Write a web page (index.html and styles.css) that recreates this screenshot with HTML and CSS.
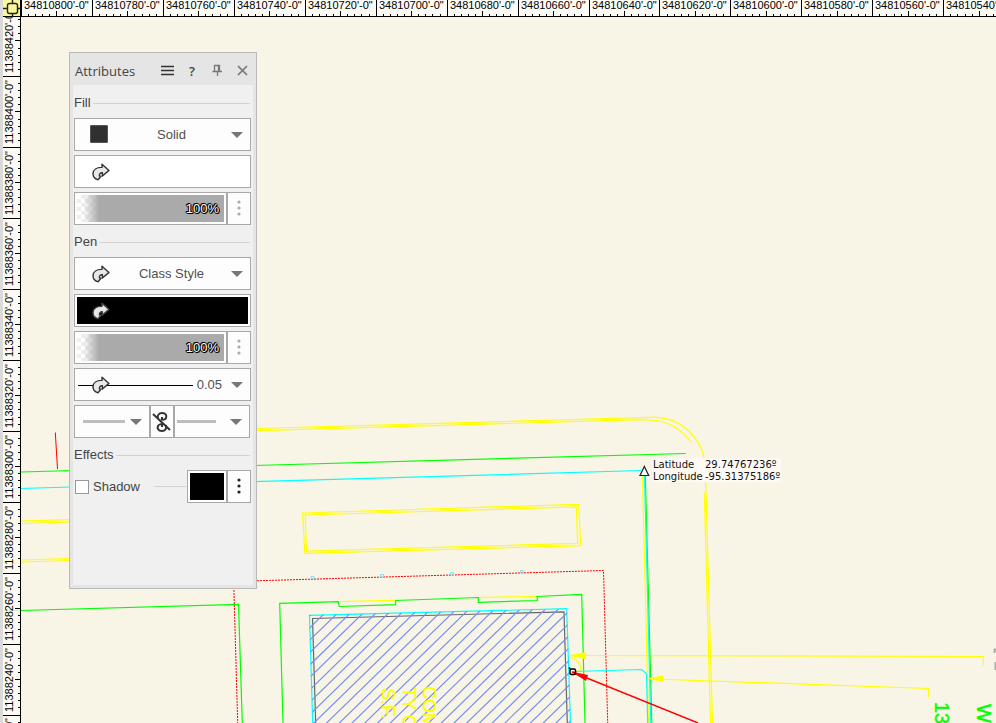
FILE: index.html
```html
<!DOCTYPE html>
<html lang="en">
<head>
<meta charset="utf-8">
<title>Site plan</title>
<link rel="stylesheet" href="styles.css">
</head>
<body>
<svg class="symbols" aria-hidden="true">
  <symbol id="class-arrow" viewBox="0 0 18 18">
    <path d="M10 1.2 17 7.4 10.4 13V9.8C8.4 9.6 7.2 10.6 7.4 13L9 13.2 6 16.8C2.6 16 1 13.4 1 10.6 1.2 6.8 4.6 4.2 10 4.4Z" stroke-width="1.4" stroke-linejoin="round"/>
  </symbol>
  <symbol id="caret" viewBox="0 0 12 6"><path d="M0 0H12L6 6Z" fill="#777"/></symbol>
  <symbol id="dots" viewBox="0 0 4 18"><circle cx="2" cy="3" r="1.6"/><circle cx="2" cy="9" r="1.6"/><circle cx="2" cy="15" r="1.6"/></symbol>
</svg>

<main class="workspace">
  <svg class="drawing" role="img" aria-label="Site plan drawing">
    <defs>
      <clipPath id="building"><path d="M309 615 567 609 571 730H313Z"/></clipPath>
    </defs>
    <g class="line yellow">
      <path d="M3 521.7 257 514M3 524 257 516.500M3 560.500 257 553M3 562.500 257 555"/>
      <path d="M257 428.500 650 417.400H655C682 417.500 702 440 704.500 460L705.500 475 712.500 723"/>
      <path d="M257 430.700 640 419.700 650 420C670 420.500 681 430 691.700 442.700M704.300 492.700 710.500 723"/>
      <path d="M302.700 513 578.700 504.300 580.700 545.700 304.700 553.300Z"/>
      <path d="M305.200 515 576.300 506.800 577.700 543.400 306.500 551.200Z"/>
      <path d="M642.500 476 648.500 723"/>
      <path d="M572 655.500 983.500 656.500V665M655 679 928.500 688.500V697"/>
      <path d="M570 657.500C577 658 581 664 581 671H575"/>
      <path d="M338 601.700 395.700 600.300M478.300 597.700 537 596.300"/>
    </g>
    <path class="line red" d="M55.300 432.500 57.500 469"/>
    <g class="line red dotted">
      <path d="M233.500 575 237.700 723M257 580.800 603.500 570.500 607.700 723"/>
    </g>
    <g class="line green">
      <path d="M3 472.500 685.700 453.500"/>
      <path d="M3 611 238.500 604.400 242.300 723"/>
      <path d="M283 723 279.700 603.400 338.300 601.700 339.300 606.500 395.700 604.700V600.500L478.300 597.500V602.300L537.500 600.500 537 596.500 581.700 594.500 585 723"/>
      <path d="M645.300 476 651.800 723"/>
    </g>
    <g class="line cyan">
      <path d="M3 489 641 470.500M644.500 476 650.800 723"/>
      <path d="M573 671.500 641.700 669.500 646.500 673.700 647.700 723"/>
      <path d="M312.700 723 309.500 615.400 566.700 608.700 570.500 723"/>
    </g>
    <path class="line wall" d="M315.700 723 312.500 618.500 564 611.800 567.300 723"/>
    <g id="hatch" class="line hatch" clip-path="url(#building)"></g>
    <g class="line marks">
      <path d="M311 578.500V576.500H314V578.500ZM380.500 577V574.500H383.500V577ZM450.500 575V572.500H453.500V575ZM520.500 573V570.500H523.500V573Z"/>
    </g>
    <g class="note yellow-text">
      <text transform="translate(423 686) rotate(90)">COM</text>
      <text transform="translate(403 687) rotate(90)">TY C</text>
      <text transform="translate(382 688) rotate(90)">S.F.</text>
    </g>
    <g class="note green-text">
      <text transform="translate(935 702) rotate(90)">13</text>
      <text transform="translate(977 704) rotate(90)">W</text>
    </g>
    <path class="stray" d="M994 649.500H996M994.500 649V653M995.500 662V670"/>
    <path fill="#ff0" d="M568 655.500 586 652V659.500ZM647 678.500 663 675.500V682Z"/>
    <path class="line red leader" d="M572 672 698 723"/>
    <path fill="red" d="M571 671.500 588 675 586 681Z"/>
    <rect class="node" x="570" y="669" width="5.500" height="5.500" rx="1.500"/>
    <path class="node" d="M569 667.500 571 670"/>
    <path class="vertex" d="M644.300 466.500 640 475.500H648.700Z"/>
    <rect x="652" y="458" width="129" height="24" fill="#fff9f4"/>
    <g class="coords">
      <text x="653" y="468">Latitude</text><text x="705" y="468">29.74767236º</text>
      <text x="653" y="480">Longitude</text><text x="705" y="480">-95.31375186º</text>
    </g>
    <g id="rulers">
      <rect class="ruler-bg" width="100%" height="17"/>
      <rect class="ruler-bg side" width="21" height="100%"/>
      <rect width="3" height="100%" fill="#dadada"/>
      <path id="ticks" class="ticks"/>
      <g id="ruler-labels" class="ruler-labels"></g>
      <rect x="3" width="17" height="16" fill="#fbf89b"/>
      <path class="ticks" d="M20.500 0V3000M3 16.500H3000"/>
      <path class="origin" d="M12.500 0V4M12.500 13V17M3 8.500H7M17 8.500H21"/>
      <rect class="origin" x="7.500" y="3.500" width="10" height="10" rx="2"/>
    </g>
  </svg>

  <aside class="palette" aria-labelledby="palette-title">
    <header class="titlebar">
      <h1 id="palette-title">Attributes</h1>
      <button aria-label="Menu"><svg width="14" height="14"><path d="M0 2.500H13M0 6.500H13M0 10.500H13" stroke="#333" stroke-width="1.400"/></svg></button>
      <button class="help" aria-label="Help">?</button>
      <button aria-label="Pin"><svg width="14" height="14" fill="none" stroke="#777"><path d="M3.500 7V1.500H8.500V7M7.500 2V7M1.500 7.500H11M6.500 7.500V12" stroke-width="1.300"/></svg></button>
      <button aria-label="Close"><svg width="14" height="14"><path d="M2 2 11 11M11 2 2 11" stroke="#777" stroke-width="1.700"/></svg></button>
    </header>
    <div class="content">
      <h2>Fill</h2>
      <div class="field">
        <select aria-label="Fill style"><option>Solid</option></select>
        <span class="swatch"></span>
        <svg class="caret"><use href="#caret"/></svg>
      </div>
      <button class="field color" aria-label="Fill color"><svg class="arrow"><use href="#class-arrow"/></svg></button>
      <div class="joined">
        <div class="field grow">
          <input type="range" aria-label="Fill opacity" value="100">
          <output>100%</output>
        </div>
        <button class="field more dim" aria-label="Fill opacity options"><svg><use href="#dots"/></svg></button>
      </div>

      <h2>Pen</h2>
      <div class="field">
        <select aria-label="Pen style"><option>Class Style</option></select>
        <svg class="arrow"><use href="#class-arrow"/></svg>
        <svg class="caret"><use href="#caret"/></svg>
      </div>
      <button class="field color black" aria-label="Pen color"><svg class="arrow"><use href="#class-arrow"/></svg></button>
      <div class="joined">
        <div class="field grow">
          <input type="range" aria-label="Pen opacity" value="100">
          <output>100%</output>
        </div>
        <button class="field more dim" aria-label="Pen opacity options"><svg><use href="#dots"/></svg></button>
      </div>
      <div class="field">
        <select class="weight" aria-label="Line thickness"><option>0.05</option></select>
        <span class="stroke"></span>
        <svg class="arrow"><use href="#class-arrow"/></svg>
        <svg class="caret"><use href="#caret"/></svg>
      </div>
      <div class="joined markers">
        <div class="field grow">
          <select aria-label="Start marker"><option></option></select>
          <span class="dash start"></span>
          <svg class="caret"><use href="#caret"/></svg>
        </div>
        <button class="field more" aria-label="Link markers">
          <svg class="chain" viewBox="0 0 20 22" fill="none" stroke="#333" stroke-width="2"><path d="M6 8C5 4 7 2 10 2 14 2 15 5 14 7 13 9 11 9 9 8M14 14C15 18 13 20 10 20 6 20 5 17 6 15 7 13 9 13 11 14M10 6V8M10 14V16M1 3 18 19"/></svg>
        </button>
        <div class="field grow">
          <select aria-label="End marker"><option></option></select>
          <span class="dash"></span>
          <svg class="caret"><use href="#caret"/></svg>
        </div>
      </div>

      <h2>Effects</h2>
      <div class="shadow-row">
        <label><input type="checkbox">Shadow</label>
        <span class="rule"></span>
        <div class="joined">
          <button class="field color black shadow-color" aria-label="Shadow color"></button>
          <button class="field more" aria-label="Shadow options"><svg><use href="#dots"/></svg></button>
        </div>
      </div>
    </div>
  </aside>
</main>
<script src="rulers.js"></script>
</body>
</html>
```
FILE: rulers.js
```js
const NS = "http://www.w3.org/2000/svg";
const MAJOR = 70.95;
const labels = document.getElementById("ruler-labels");

function addLabel(text, transform) {
  const el = document.createElementNS(NS, "text");
  el.setAttribute("transform", transform);
  el.textContent = text;
  labels.append(el);
}

function drawRulers() {
  labels.replaceChildren();
  let d = "";
  for (let k = 0; 21 + k * MAJOR < innerWidth; k++) {
    const x = Math.floor(21.4 + k * MAJOR);
    d += `M${x + 0.5} 0V16`;
    addLabel(`${34810800 - 20 * k}'-0"`, `translate(${x + 3} 9)`);
    for (let i = 1; i < 10; i++) {
      const tick = Math.floor(21.4 + (k + i / 10) * MAJOR) + 0.5;
      d += `M${tick} ${i === 5 ? 11 : 14}V16`;
    }
  }
  for (let k = 0; 5 + (k - 1) * MAJOR < innerHeight; k++) {
    const y = Math.floor(5.5 + k * MAJOR);
    d += `M3 ${y + 0.5}H20`;
    if (k > 0) addLabel(`${11388440 - 20 * k}'-0"`, `translate(13 ${y - 3}) rotate(-90)`);
    for (let i = 1; i < 10; i++) {
      const tick = Math.floor(5.5 + (k + i / 10) * MAJOR) + 0.5;
      d += `M${i === 5 ? 15 : 18} ${tick}H20`;
    }
  }
  document.getElementById("ticks").setAttribute("d", d);
}

drawRulers();
addEventListener("resize", drawRulers);

/* Diagonal hatch of the building footprint */
let hatch = "";
for (let k = -1; k < 34; k++) {
  const y = 626.5 + 12.4 * k;
  hatch += `M309 ${y + 2}L609 ${y - 290}`;
}
const path = document.createElementNS(NS, "path");
path.setAttribute("d", hatch);
document.getElementById("hatch").append(path);
```
FILE: styles.css
```css
* { box-sizing: border-box; }

body {
  margin: 0;
  background: #f9f5e6;
  color: #444;
  font: 13px/16px "Liberation Sans", Arial, sans-serif;
}

.symbols { display: none; }

.workspace {
  position: relative;
  height: 100vh;
  overflow: hidden;
}

.drawing {
  display: block;
  width: 100%;
  height: 100%;
}

/* Plan linework */
.line { fill: none; stroke-width: 1; }
.yellow { stroke: #ff0; }
.yellow path { stroke-width: 1.2; }
.red { stroke: #f00; }
.leader { stroke-width: 1.4; }
.dotted { stroke-dasharray: 2 1; }
.green { stroke: #0f0; stroke-width: 1.2; }
.cyan { stroke: #0ff; stroke-width: 1.2; }
.wall { stroke: #666; stroke-width: 1.2; }
.hatch { stroke: #7590f8; stroke-width: 1.2; }
.marks { stroke: #8cdcf4; }
.stray { stroke: #aaa; stroke-width: 2; }
.node { fill: none; stroke: #000; stroke-width: 1.5; }
.vertex { fill: #fff; stroke: #222; stroke-width: 1.2; }
.note { font-size: 18px; }
.yellow-text { fill: #ff0; stroke: #ff0; stroke-width: .4; }
.green-text { fill: #0f0; stroke: #0f0; stroke-width: .4; font-size: 20px; }
.coords { fill: #111; font: 10px "DejaVu Sans", Verdana, sans-serif; }

/* Rulers */
.ruler-bg { fill: #fcfbf6; }
.ruler-bg.side { fill-opacity: .8; }
.ticks { fill: none; stroke: #000; stroke-width: 1; }
.ruler-labels { fill: #000; font-size: 11px; }
.origin { fill: none; stroke: #222; stroke-width: 1.4; }

/* Attributes palette */
.palette {
  position: absolute;
  left: 69px;
  top: 52px;
  width: 188px;
  border: 1px solid #b9b9b9;
  padding: 0 3px 3px;
  background: #e5e5e5;
}

.titlebar {
  display: flex;
  align-items: center;
  gap: 11px;
  height: 32px;
  padding: 4px 3px 0 2px;
}

.titlebar h1 {
  flex: 1;
  margin: 0;
  font: 13px/18px "Open Sans", "Noto Sans", sans-serif;
}

.titlebar button {
  display: grid;
  place-items: center;
  width: 14px;
  height: 14px;
  border: 0;
  padding: 0;
  background: none;
  color: #444;
}

.titlebar .help {
  justify-items: start;
  padding-left: 3px;
  font: 600 13px/13px "Open Sans", sans-serif;
}

.content {
  display: flex;
  flex-direction: column;
  gap: 4px;
  min-height: 500px;
  padding: 5px 2px 0 1px;
  background: #f0f0f0;
}

.content h2 {
  display: flex;
  align-items: center;
  gap: 2px;
  height: 24px;
  margin: 0;
  padding: 2px 1px 0 0;
  font-size: 13px;
  font-weight: normal;
}

.content h2::after,
.rule {
  content: "";
  flex: 1;
  height: 1px;
  background: #d2d2d2;
}

.field {
  display: grid;
  align-items: center;
  height: 33px;
  border: 1px solid #a8a8a8;
  padding: 0;
  background: #fdfdfd;
}

.field > * {
  grid-area: 1 / 1;
  pointer-events: none;
}

.field > select,
.field > input {
  width: 100%;
  height: 31px;
  margin: 0;
  pointer-events: auto;
}

.field select {
  appearance: none;
  border: 0;
  padding: 0 0 0 18px;
  background: none;
  color: #505050;
  font: inherit;
  text-align-last: center;
}

.field select.weight {
  padding-right: 28px;
  text-align-last: right;
}

.caret {
  justify-self: end;
  width: 12px;
  height: 6px;
  margin: 1px 7px 0 0;
}

.arrow {
  width: 18px;
  height: 18px;
  margin-left: 17px;
  fill: #e8e8e8;
  stroke: #333;
}

.swatch {
  width: 18px;
  height: 18px;
  margin: 0 0 1px 15px;
  border: 1px solid #555;
  border-radius: 1px;
  background: #303030;
}

.color {
  width: 100%;
  background: #fff;
}

.color.black {
  padding: 2px;
  background: #000;
  box-shadow: inset 0 0 0 2px #fff;
}

.color.black .arrow {
  margin-left: 15px;
  stroke: #444;
}

.joined { display: flex; }
.joined .grow { flex: 1; min-width: 0; }
.markers { margin-right: 1px; }

.more {
  flex: none;
  width: 24px;
  justify-items: center;
}

.more svg {
  width: 4px;
  height: 18px;
  margin-bottom: 2px;
  fill: #222;
}

.more.dim svg { fill: #aaa; }

.more svg.chain {
  width: 20px;
  height: 22px;
  margin: 0;
  fill: none;
}

.field input[type="range"] {
  appearance: none;
  width: auto;
  height: 27px;
  margin: 2px;
  background:
    linear-gradient(to right, transparent 6px, #aaa 22px),
    repeating-conic-gradient(#eee 0 25%, #fff 0 50%) 0 0 / 8px 8px;
}

.field input[type="range"]::-webkit-slider-thumb { opacity: 0; }

output {
  justify-self: end;
  margin-right: 7px;
  color: #fff;
  text-shadow: 1px 0 #000, -1px 0 #000, 0 1px #000, 0 -1px #000, 1px 1px #000, -1px -1px #000;
}

.stroke {
  width: 115px;
  height: 1px;
  margin: 1px 0 0 3px;
  background: #000;
}

.dash {
  width: 39px;
  height: 3px;
  margin-left: 2px;
  background: #bdbdbd;
}

.dash.start { width: 42px; margin-left: 8px; }

.shadow-row {
  display: flex;
  align-items: center;
}

.shadow-row label {
  display: flex;
  align-items: center;
  gap: 4px;
  margin-right: 14px;
}

.shadow-row input {
  appearance: none;
  width: 14px;
  height: 14px;
  margin: 0 0 0 1px;
  border: 1px solid #999;
  background: #fff;
}

.rule { margin-right: 1px; }
.shadow-color { width: 40px; }
```
